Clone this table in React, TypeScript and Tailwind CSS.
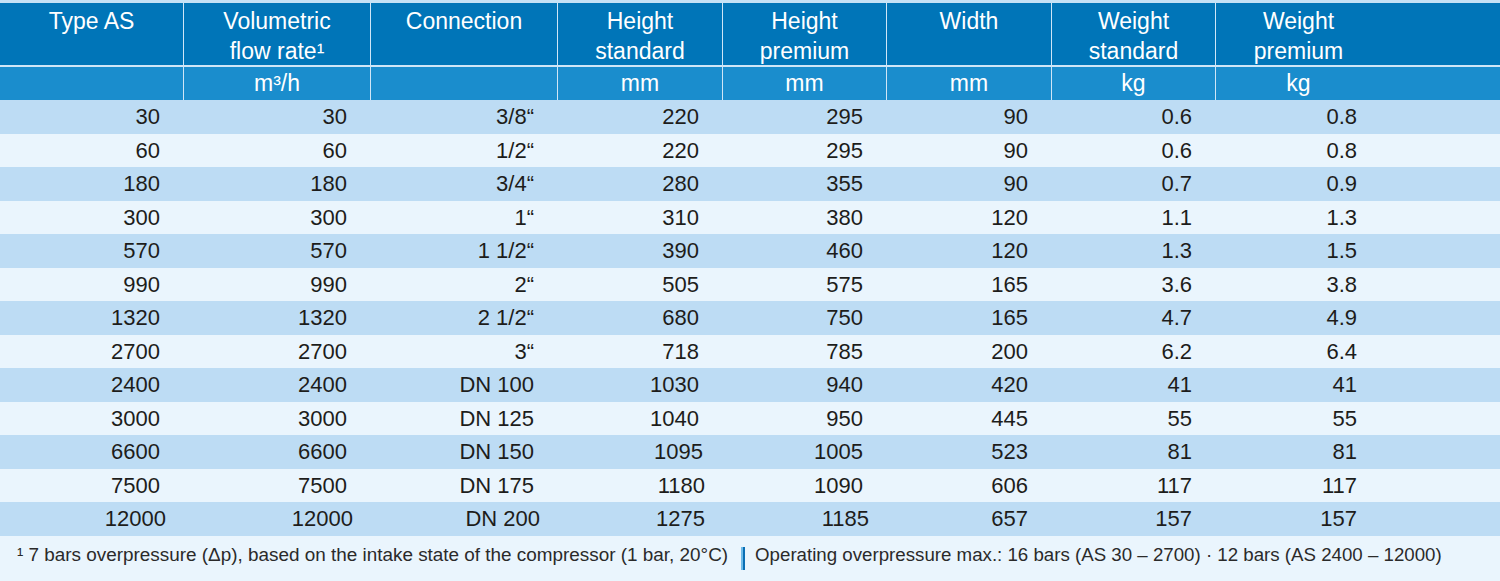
import React from "react";

type Row = string[];

const headers: { top: string; bottom?: string; unit?: string }[] = [
  { top: "Type AS" },
  { top: "Volumetric", bottom: "flow rate¹", unit: "m³/h" },
  { top: "Connection" },
  { top: "Height", bottom: "standard", unit: "mm" },
  { top: "Height", bottom: "premium", unit: "mm" },
  { top: "Width", unit: "mm" },
  { top: "Weight", bottom: "standard", unit: "kg" },
  { top: "Weight", bottom: "premium", unit: "kg" },
];

const rows: Row[] = [
  ["30", "30", "3/8“", "220", "295", "90", "0.6", "0.8"],
  ["60", "60", "1/2“", "220", "295", "90", "0.6", "0.8"],
  ["180", "180", "3/4“", "280", "355", "90", "0.7", "0.9"],
  ["300", "300", "1“", "310", "380", "120", "1.1", "1.3"],
  ["570", "570", "1\u00a01/2“", "390", "460", "120", "1.3", "1.5"],
  ["990", "990", "2“", "505", "575", "165", "3.6", "3.8"],
  ["1320", "1320", "2\u00a01/2“", "680", "750", "165", "4.7", "4.9"],
  ["2700", "2700", "3“", "718", "785", "200", "6.2", "6.4"],
  ["2400", "2400", "DN 100", "1030", "940", "420", "41", "41"],
  ["3000", "3000", "DN 125", "1040", "950", "445", "55", "55"],
  ["6600", "6600", "DN 150", "1095", "1005", "523", "81", "81"],
  ["7500", "7500", "DN 175", "1180", "1090", "606", "117", "117"],
  ["12000", "12000", "DN 200", "1275", "1185", "657", "157", "157"],
];

const grid =
  "grid grid-cols-[184px_187px_187px_165px_164px_165px_164px_165px_1fr]";

// the scan drifts a few px right in the lower rows
function padFor(r: number, c: number) {
  if (r === 12 && c <= 4) return "pr-[18px]";
  if (r === 11 && c === 3) return "pr-[18px]";
  if (r === 10 && c === 3) return "pr-[20px]";
  return "pr-6";
}

export default function App() {
  return (
    <div className="w-[1500px] h-[581px] overflow-hidden bg-[#eaf5fd] font-['Liberation_Sans',Arial,sans-serif] text-[#1d1d1b]">
      <div className="h-[3px] bg-[#c5e2f6]" />

      {/* header */}
      <div className={`${grid} h-[62px] bg-[#0075b8] text-white text-[23px] leading-[30px]`}>
        {headers.map((h, i) => (
          <div
            key={i}
            className={`pt-[3px] text-center ${i < 7 ? "border-r-[1.5px] border-[#cfe6f7]" : ""}`}
          >
            <div>{h.top}</div>
            {h.bottom && <div>{h.bottom}</div>}
          </div>
        ))}
        <div />
      </div>
      <div className="h-[2px] bg-[#cfe6f7]" />

      {/* units */}
      <div className={`${grid} h-[33px] bg-[#1a8dcd] text-white text-[23px] leading-[33px]`}>
        {headers.map((h, i) => (
          <div
            key={i}
            className={`text-center ${i < 7 ? "border-r-[1.5px] border-[#cfe6f7]" : ""}`}
          >
            {h.unit ?? ""}
          </div>
        ))}
        <div />
      </div>

      {/* data */}
      {rows.map((row, r) => (
        <div
          key={r}
          className={`${grid} h-[33.5px] text-[22px] leading-[33.5px] ${
            r % 2 === 0 ? "bg-[#bddcf4]" : "bg-[#eaf5fd]"
          }`}
        >
          {row.map((v, c) => (
            <div key={c} className={`text-right whitespace-nowrap ${padFor(r, c)}`}>
              {v}
            </div>
          ))}
          <div />
        </div>
      ))}

      {/* footnote */}
      <div className="flex items-start pl-[17px] pt-[7px] leading-[24px] text-[#2a2a2a] whitespace-nowrap">
        <span className="text-[18.9px]">
          ¹ 7 bars overpressure (Δp), based on the intake state of the compressor (1 bar, 20°C)
        </span>
        <div className="ml-[13px] mt-[4.5px] h-[23px] w-[4px] border-l-2 border-[#6fbbe8] bg-[#0a6fb5]" />
        <span className="ml-[10px] text-[18.7px]">
          Operating overpressure max.: 16 bars (AS 30 – 2700) · 12 bars (AS 2400 – 12000)
        </span>
      </div>
    </div>
  );
}
